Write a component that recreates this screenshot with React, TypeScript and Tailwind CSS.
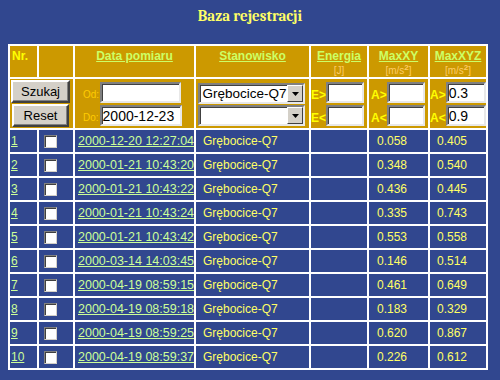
import React from 'react';

const rows = [
  ['1', '2000-12-20 12:27:04', '0.058', '0.405'],
  ['2', '2000-01-21 10:43:20', '0.348', '0.540'],
  ['3', '2000-01-21 10:43:22', '0.436', '0.445'],
  ['4', '2000-01-21 10:43:24', '0.335', '0.743'],
  ['5', '2000-01-21 10:43:42', '0.553', '0.558'],
  ['6', '2000-03-14 14:03:45', '0.146', '0.514'],
  ['7', '2000-04-19 08:59:15', '0.461', '0.649'],
  ['8', '2000-04-19 08:59:18', '0.183', '0.329'],
  ['9', '2000-04-19 08:59:25', '0.620', '0.867'],
  ['10', '2000-04-19 08:59:37', '0.226', '0.612'],
];

const inset =
  'bg-white border-2 border-t-[#808080] border-l-[#808080] border-b-[#e8e8e8] border-r-[#e8e8e8] shadow-[inset_1px_1px_0_#404040]';

const Field = ({ value = '', w }: { value?: string; w: string }) => (
  <input
    readOnly
    defaultValue={value}
    className={`${inset} ${w} h-[21px] px-[1px] text-[14px] leading-[15px] text-black outline-none`}
  />
);

const Button = ({ label, w }: { label: string; w: string }) => (
  <button
    className={`${w} h-[23px] bg-[#d4d0c8] border-2 border-t-white border-l-white border-b-[#404040] border-r-[#404040] shadow-[inset_-1px_-1px_0_#808080] text-[13px] leading-[17px] text-black`}
  >
    {label}
  </button>
);

const Select = ({ value = '' }: { value?: string }) => (
  <div className={`${inset} w-[107px] h-[21px] flex items-center`}>
    <span className="flex-1 pl-[2px] text-[13.5px] leading-[15px] text-black whitespace-nowrap overflow-hidden">
      {value}
    </span>
    <span className="w-[16px] h-[17px] bg-[#d4d0c8] border border-t-white border-l-white border-b-[#404040] border-r-[#404040] flex items-center justify-center">
      <svg width="7" height="4" viewBox="0 0 7 4">
        <polygon points="0,0 7,0 3.5,4" fill="#000" />
      </svg>
    </span>
  </div>
);

const RangeCell = ({ a, b, lo = '', hi = '', w }: { a: string; b: string; lo?: string; hi?: string; w: string }) => (
  <div className="flex flex-col gap-[2px] pt-[3px]">
    <div className="flex items-end">
      <span className="text-[12px] font-bold text-[#ffff00] leading-[14px] pb-[1px]">{a}</span>
      <Field value={lo} w={w} />
    </div>
    <div className="flex items-end">
      <span className="text-[12px] font-bold text-[#ffff00] leading-[14px] pb-[1px]">{b}</span>
      <Field value={hi} w={w} />
    </div>
  </div>
);

const HeadLink = ({ label, unit }: { label: string; unit?: React.ReactNode }) => (
  <div className="text-center pt-[3px]">
    <div className="text-[12px] leading-[14px] font-bold text-[#ccff66] underline">{label}</div>
    {unit && <div className="pt-[2px] text-[10px] leading-[11px] text-[#ffcc66]">{unit}</div>}
  </div>
);

const MS = (
  <>
    [m/s<sup className="text-[8px] font-bold leading-none">2</sup>]
  </>
);

export default function App() {
  return (
    <div className="w-[500px] h-[380px] bg-[#31478f] overflow-hidden">
      <h1 className="h-[44px] pt-[8px] text-center font-serif font-bold text-[15px] leading-[16px] text-[#ffff66]">
        Baza rejestracji
      </h1>
      <table className="ml-[8px] w-[480px] table-fixed border-separate border-spacing-[2px] bg-white text-[12px] leading-[14px] font-[family-name:Liberation_Sans,Arial,sans-serif]">
        <colgroup>
          <col className="w-[27px]" />
          <col className="w-[34px]" />
          <col className="w-[119px]" />
          <col className="w-[113px]" />
          <col className="w-[56px]" />
          <col className="w-[59px]" />
          <col className="w-[56px]" />
        </colgroup>
        <thead>
          <tr className="h-[31px] bg-[#cc9900] align-top">
            <th className="p-0 text-left">
              <div className="pt-[3px] pl-[2px] text-[12px] leading-[14px] font-bold text-[#ffff00]">Nr.</div>
            </th>
            <th className="p-0" />
            <th className="p-0 font-normal">
              <HeadLink label="Data pomiaru" />
            </th>
            <th className="p-0 font-normal">
              <HeadLink label="Stanowisko" />
            </th>
            <th className="p-0 font-normal">
              <HeadLink label="Energia" unit="[J]" />
            </th>
            <th className="p-0 font-normal">
              <HeadLink label="MaxXY" unit={MS} />
            </th>
            <th className="p-0 font-normal">
              <HeadLink label="MaxXYZ" unit={MS} />
            </th>
          </tr>
          <tr className="h-[49px] bg-[#cc9900] align-top">
            <th colSpan={2} className="p-0 font-normal">
              <div className="flex flex-col items-center gap-[1px] pt-[1px] pr-[2px]">
                <Button label="Szukaj" w="w-[59px]" />
                <Button label="Reset" w="w-[57px]" />
              </div>
            </th>
            <th className="p-0 font-normal">
              <div className="flex flex-col gap-[2px] pt-[3px] pl-[8px]">
                <div className="flex items-end gap-[1px]">
                  <span className="text-[10px] leading-[12px] text-[#ffcc00] pb-[2px]">Od:</span>
                  <Field w="w-[81px]" />
                </div>
                <div className="flex items-end gap-[1px]">
                  <span className="text-[10px] leading-[12px] text-[#ffcc00] pb-[2px]">Do:</span>
                  <Field value="2000-12-23" w="w-[82px]" />
                </div>
              </div>
            </th>
            <th className="p-0 font-normal">
              <div className="flex flex-col gap-[1px] pt-[4px] pl-[2px]">
                <Select value="Grębocice-Q7" />
                <Select />
              </div>
            </th>
            <th className="p-0 font-normal">
              <RangeCell a="E>" b="E<" w="w-[38px]" />
            </th>
            <th className="p-0 font-normal">
              <div className="pl-[2px]">
                <RangeCell a="A>" b="A<" w="w-[38px]" />
              </div>
            </th>
            <th className="p-0 font-normal">
              <RangeCell a="A>" b="A<" lo="0.3" hi="0.9" w="w-[40px]" />
            </th>
          </tr>
        </thead>
        <tbody>
          {rows.map(([nr, date, xy, xyz]) => (
            <tr key={nr} className="h-[22px] bg-[#31478f] align-middle">
              <td className="p-0 pl-[1px]">
                <a className="text-[#ccff99] underline">{nr}</a>
              </td>
              <td className="p-0 pl-[5px]">
                <span className="block w-[13px] h-[13px] bg-white border border-t-[#808080] border-l-[#808080] border-b-[#d4d0c8] border-r-[#d4d0c8] shadow-[inset_1px_1px_0_#404040]" />
              </td>
              <td className="p-0 pl-[3px] whitespace-nowrap">
                <a className="text-[12.5px] text-[#ccff99] underline">{date}</a>
              </td>
              <td className="p-0 pl-[7px] text-[#ffff66]">Grębocice-Q7</td>
              <td className="p-0" />
              <td className="p-0 pl-[8px] text-[#ffff66]">{xy}</td>
              <td className="p-0 pl-[7px] text-[#ffff66]">{xyz}</td>
            </tr>
          ))}
        </tbody>
      </table>
    </div>
  );
}
